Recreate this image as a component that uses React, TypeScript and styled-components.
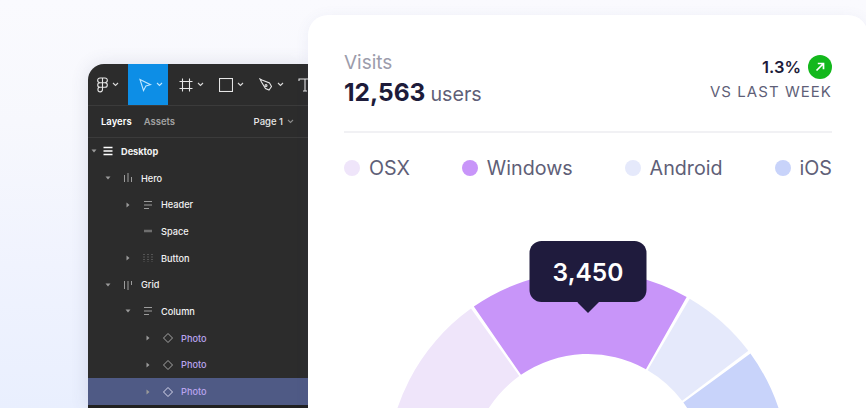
import { FC } from "react"
import styled, { createGlobalStyle } from "styled-components"

const GlobalStyle = createGlobalStyle`
  html, body {
    margin: 0;
    padding: 0;
  }
  body {
    font-family: Inter, "Liberation Sans", sans-serif;
  }
`

const StyledPage = styled.div`
  width: 866px;
  height: 408px;
  overflow: hidden;
  display: flex;
  align-items: flex-start;
  padding-left: 88px;
  box-sizing: border-box;
  background: linear-gradient(180deg, #fafafe 0%, #f7f8fd 30%, #f0f3fe 65%, #e9effe 100%);
`

/* editor panel */
const StyledPanel = styled.div`
  flex: none;
  width: 220px;
  height: 344px;
  margin-top: 64px;
  background-color: #2c2c2c;
  border-top-left-radius: 16px;
  box-shadow: 0 0 18px rgba(70, 75, 120, 0.14);
  overflow: hidden;
  color: #fff;
  font-size: 9.5px;
  font-weight: 500;
`

const StyledToolbar = styled.div`
  height: 41px;
  display: flex;
  border-bottom: 1px solid #3b3b3b;
`

const StyledTool = styled.div<{ $active?: boolean; $inset?: number }>`
  flex: none;
  width: 40px;
  box-sizing: border-box;
  padding-left: ${({ $inset = 11 }) => $inset}px;
  display: flex;
  align-items: center;
  gap: 4px;
  background-color: ${({ $active }) => ($active ? "#0d8ee6" : "transparent")};
`

const StyledTabs = styled.div`
  height: 31px;
  display: flex;
  align-items: center;
  padding: 0 14px 0 13px;
  gap: 12px;
  border-bottom: 1px solid #3b3b3b;
`

const StyledTab = styled.span<{ $muted?: boolean }>`
  font-weight: 600;
  color: ${({ $muted }) => ($muted ? "#a2a2a2" : "#fff")};
`

const StyledPageSelect = styled.span`
  margin-left: auto;
  display: flex;
  align-items: center;
  gap: 4px;
  color: #e8e8e8;
`

const StyledLayers = styled.div`
  display: flex;
  flex-direction: column;
`

const StyledRow = styled.div<{ $depth: number; $selected?: boolean }>`
  height: 26.7px;
  flex: none;
  display: flex;
  align-items: center;
  font-size: 9.2px;
  padding-left: ${({ $depth }) => ($depth === 0 ? 2 : $depth * 20 - 4)}px;
  background-color: ${({ $selected }) => ($selected ? "#4f5a85" : "transparent")};
  box-shadow: ${({ $selected }) => ($selected ? "0 6px 0 #212121" : "none")};
`

const StyledCaretSlot = styled.span<{ $depth: number }>`
  flex: none;
  width: 8px;
  display: flex;
  justify-content: center;
  margin-right: ${({ $depth }) => ($depth === 0 ? 4 : 10)}px;
`

const StyledRowIcon = styled.span`
  flex: none;
  width: 12px;
  display: flex;
  justify-content: center;
  margin-right: 7px;
`

const StyledRowLabel = styled.span<{ $accent?: boolean; $bold?: boolean }>`
  color: ${({ $accent }) => ($accent ? "#b9a4ee" : "#f2f2f2")};
  font-weight: ${({ $bold }) => ($bold ? 700 : 500)};
`

/* visits card */
const StyledCard = styled.div`
  flex: none;
  width: 560px;
  height: 420px;
  margin-top: 15px;
  padding: 36px 36px 0;
  box-sizing: border-box;
  background-color: #fff;
  border-radius: 20px 20px 0 0;
  box-shadow: 0 2px 14px rgba(90, 100, 170, 0.08);
  position: relative;
`

const StyledHeader = styled.div`
  display: flex;
  justify-content: space-between;
  height: 80px;
  border-bottom: 2px solid #f1f1f4;
`

const StyledColumn = styled.div`
  display: flex;
  flex-direction: column;
`

const StyledVisits = styled.span`
  font-size: 19px;
  line-height: 23px;
  color: #9c9cab;
`

const StyledTotal = styled.span`
  display: flex;
  align-items: baseline;
  gap: 5px;
  margin-top: 3px;
  font-size: 19.7px;
  line-height: 30px;
  color: #5f5f78;
`

const StyledTotalValue = styled.span`
  font-size: 24.5px;
  font-weight: 700;
  color: #1d1b3a;
`

const StyledTrend = styled.div`
  display: flex;
  flex-direction: column;
  align-items: flex-end;
  margin-top: 4px;
`

const StyledChange = styled.span`
  display: flex;
  align-items: center;
  gap: 7px;
  font-size: 16.5px;
  font-weight: 600;
  color: #1d1b3a;
`

const StyledBadge = styled.span`
  width: 24px;
  height: 24px;
  border-radius: 50%;
  background-color: #13b81c;
  display: flex;
  align-items: center;
  justify-content: center;
`

const StyledCompare = styled.span`
  margin-top: 3px;
  font-size: 15px;
  line-height: 20px;
  letter-spacing: 1.05px;
  color: #5f5f78;
`

const StyledLegend = styled.div`
  display: flex;
  justify-content: space-between;
  margin-top: 23px;
`

const StyledLegendItem = styled.div`
  display: flex;
  align-items: center;
  gap: 9px;
  font-size: 19.7px;
  line-height: 24px;
  color: #5f5f78;
`

const StyledDot = styled.span<{ $color: string }>`
  width: 16px;
  height: 16px;
  border-radius: 50%;
  background-color: ${({ $color }) => $color};
`

const StyledChart = styled.div`
  position: relative;
  width: 402px;
  margin: 91px auto 0;
`

const StyledDonut = styled.svg`
  display: block;
`

const StyledTooltip = styled.div`
  position: absolute;
  top: -30px;
  left: 50%;
  translate: -50% 0;
  width: 117px;
  height: 61px;
  border-radius: 12px;
  background-color: #1f1b3d;
  color: #fff;
  font-size: 24.5px;
  font-weight: 600;
  display: flex;
  align-items: center;
  justify-content: center;
  &::after {
    content: "";
    position: absolute;
    left: 50%;
    bottom: -11px;
    translate: -50% 0;
    width: 22px;
    height: 11px;
    background-color: #1f1b3d;
    clip-path: polygon(0 0, 100% 0, 50% 100%);
  }
`

const Chevron: FC<{ color?: string }> = ({ color = "#d8d8d8" }) => (
  <svg width="7" height="5" viewBox="0 0 7 5" fill="none">
    <path d="M1 1l2.5 2.5L6 1" stroke={color} strokeWidth="1.1" />
  </svg>
)

const Caret: FC<{ open?: boolean }> = ({ open }) => (
  <svg width="6" height="6" viewBox="0 0 6 6" fill="#9a9a9a">
    <path d={open ? "M0.5 1.5h5L3 4.5z" : "M1.5 0.5v5L4.5 3z"} />
  </svg>
)

type LayerIcon = "lines" | "bold" | "bars" | "barsAlt" | "space" | "dots" | "diamond"

const RowGlyph: FC<{ icon: LayerIcon; selected?: boolean }> = ({ icon, selected }) => {
  const stroke = icon === "bold" ? "#fff" : "#9c9c9c"
  return (
    <svg width="12" height="12" viewBox="0 0 12 12" fill="none" stroke={stroke}>
      {icon === "lines" && <path d="M2 2.5h8M2 6h8M2 9.5h5" />}
      {icon === "bold" && <path d="M1.5 2.5h9M1.5 6h9M1.5 9.5h9" strokeWidth="1.5" />}
      {icon === "bars" && <path d="M2.5 3v7M6 1v9M9.500 5v5" />}
      {icon === "barsAlt" && <path d="M2.500 2v8M6 2v9M9.500 2v4" />}
      {icon === "space" && <path d="M2 6h8" strokeWidth="2.5" stroke="#6f6f6f" />}
      {icon === "dots" && (
        <path d="M2 2v8M6 2v8M10 2v8" strokeDasharray="1 1.500" stroke="#7d7d7d" />
      )}
      {icon === "diamond" && (
        <path
          d="M6 1.500L10.500 6 6 10.500 1.500 6z"
          stroke={selected ? "#d8d8ec" : "#a5a5a5"}
        />
      )}
    </svg>
  )
}

const layers: {
  label: string
  depth: number
  icon: LayerIcon
  caret?: "open" | "closed"
  bold?: boolean
  accent?: boolean
  selected?: boolean
}[] = [
  { label: "Desktop", depth: 0, icon: "bold", caret: "open", bold: true },
  { label: "Hero", depth: 1, icon: "bars", caret: "open" },
  { label: "Header", depth: 2, icon: "lines", caret: "closed" },
  { label: "Space", depth: 2, icon: "space" },
  { label: "Button", depth: 2, icon: "dots", caret: "closed" },
  { label: "Grid", depth: 1, icon: "barsAlt", caret: "open" },
  { label: "Column", depth: 2, icon: "lines", caret: "open" },
  { label: "Photo", depth: 3, icon: "diamond", caret: "closed", accent: true },
  { label: "Photo", depth: 3, icon: "diamond", caret: "closed", accent: true },
  { label: "Photo", depth: 3, icon: "diamond", caret: "closed", accent: true, selected: true },
]

const legend = [
  { label: "OSX", color: "#efe5fa" },
  { label: "Windows", color: "#c895f9" },
  { label: "Android", color: "#e5e9fb" },
  { label: "iOS", color: "#c8d3fa" },
]

const CX = 201
const CY = 201
const OUTER = 201
const INNER = 118

// angles are in degrees, clockwise from the top of the ring
const polar = (r: number, deg: number) => {
  const rad = (deg * Math.PI) / 180
  return `${(CX + r * Math.sin(rad)).toFixed(2)} ${(CY - r * Math.cos(rad)).toFixed(2)}`
}

const slice = (from: number, to: number) =>
  `M${polar(OUTER, from)}A${OUTER} ${OUTER} 0 0 1 ${polar(OUTER, to)}` +
  `L${polar(INNER, to)}A${INNER} ${INNER} 0 0 0 ${polar(INNER, from)}Z`

const slices = [
  { d: slice(-90, -35.6), color: "#efe5fa" },
  { d: slice(-34.6, 29.4), color: "#c895f9" },
  { d: slice(30.4, 52.9), color: "#e5e9fb" },
  { d: slice(53.9, 90), color: "#c8d3fa" },
]

const App: FC = () => (
  <StyledPage>
    <GlobalStyle />
    <StyledPanel>
      <StyledToolbar>
        <StyledTool $inset={9}>
          <svg width="11" height="16" viewBox="0 0 11 16" fill="none" stroke="#e6e6e6" strokeWidth="1.1">
            <path d="M5.500 1H3a2.300 2.300 0 000 4.700h2.500zM5.500 1H8a2.300 2.300 0 010 4.700H5.500zM5.500 5.700H3a2.300 2.300 0 000 4.600h2.500zM5.500 5.700H8a2.300 2.300 0 010 4.600H5.500zM5.500 10.300H3A2.300 2.300 0 105.500 12.600z" />
          </svg>
          <Chevron />
        </StyledTool>
        <StyledTool $active $inset={10}>
          <svg width="14" height="14" viewBox="0 0 14 14" fill="none" stroke="#bfe6ff" strokeWidth="1.1">
            <path d="M2 1.500l10.500 5.200-4.600 1.300-2.400 4.500z" />
          </svg>
          <Chevron color="#bfe6ff" />
        </StyledTool>
        <StyledTool>
          <svg width="14" height="14" viewBox="0 0 14 14" fill="none" stroke="#e6e6e6" strokeWidth="1.1">
            <path d="M3.500 0.500v13M10.500 0.500v13M0.500 3.500h13M0.500 10.500h13" />
          </svg>
          <Chevron />
        </StyledTool>
        <StyledTool>
          <svg width="14" height="14" viewBox="0 0 14 14" fill="none" stroke="#e6e6e6" strokeWidth="1.1">
            <rect x="0.500" y="0.500" width="13" height="13" />
          </svg>
          <Chevron />
        </StyledTool>
        <StyledTool>
          <svg width="14" height="14" viewBox="0 0 14 14" fill="none" stroke="#e6e6e6" strokeWidth="1.1">
            <path d="M1 1l2 1 7.500 3 2 3.500-2.500 3.500-3.500-1.500L2.500 4z" />
            <circle cx="7" cy="7.500" r="1" />
          </svg>
          <Chevron />
        </StyledTool>
        <StyledTool $inset={10}>
          <svg width="14" height="14" viewBox="0 0 14 14" fill="none" stroke="#e6e6e6" strokeWidth="1.1">
            <path d="M1 3V1h12v2M7 1v12M5 13h4" />
          </svg>
        </StyledTool>
      </StyledToolbar>
      <StyledTabs>
        <StyledTab>Layers</StyledTab>
        <StyledTab $muted>Assets</StyledTab>
        <StyledPageSelect>
          Page 1
          <Chevron color="#8a8a8a" />
        </StyledPageSelect>
      </StyledTabs>
      <StyledLayers>
        {layers.map((layer, i) => (
          <StyledRow key={i} $depth={layer.depth} $selected={layer.selected}>
            <StyledCaretSlot $depth={layer.depth}>
              {layer.caret && <Caret open={layer.caret === "open"} />}
            </StyledCaretSlot>
            <StyledRowIcon>
              <RowGlyph icon={layer.icon} selected={layer.selected} />
            </StyledRowIcon>
            <StyledRowLabel $accent={layer.accent} $bold={layer.bold}>
              {layer.label}
            </StyledRowLabel>
          </StyledRow>
        ))}
      </StyledLayers>
    </StyledPanel>

    <StyledCard>
      <StyledHeader>
        <StyledColumn>
          <StyledVisits>Visits</StyledVisits>
          <StyledTotal>
            <StyledTotalValue>12,563</StyledTotalValue>
            users
          </StyledTotal>
        </StyledColumn>
        <StyledTrend>
          <StyledChange>
            1.3%
            <StyledBadge>
              <svg width="12" height="12" viewBox="0 0 12 12" fill="none" stroke="#fff" strokeWidth="1.7">
                <path d="M2.500 9.500l7-7M3.800 2.500h5.700v5.700" />
              </svg>
            </StyledBadge>
          </StyledChange>
          <StyledCompare>VS LAST WEEK</StyledCompare>
        </StyledTrend>
      </StyledHeader>
      <StyledLegend>
        {legend.map((item) => (
          <StyledLegendItem key={item.label}>
            <StyledDot $color={item.color} />
            {item.label}
          </StyledLegendItem>
        ))}
      </StyledLegend>
      <StyledChart>
        <StyledDonut width="402" height="402" viewBox="0 0 402 402">
          {slices.map((s, i) => (
            <path key={i} d={s.d} fill={s.color} />
          ))}
        </StyledDonut>
        <StyledTooltip>3,450</StyledTooltip>
      </StyledChart>
    </StyledCard>
  </StyledPage>
)

export default App
